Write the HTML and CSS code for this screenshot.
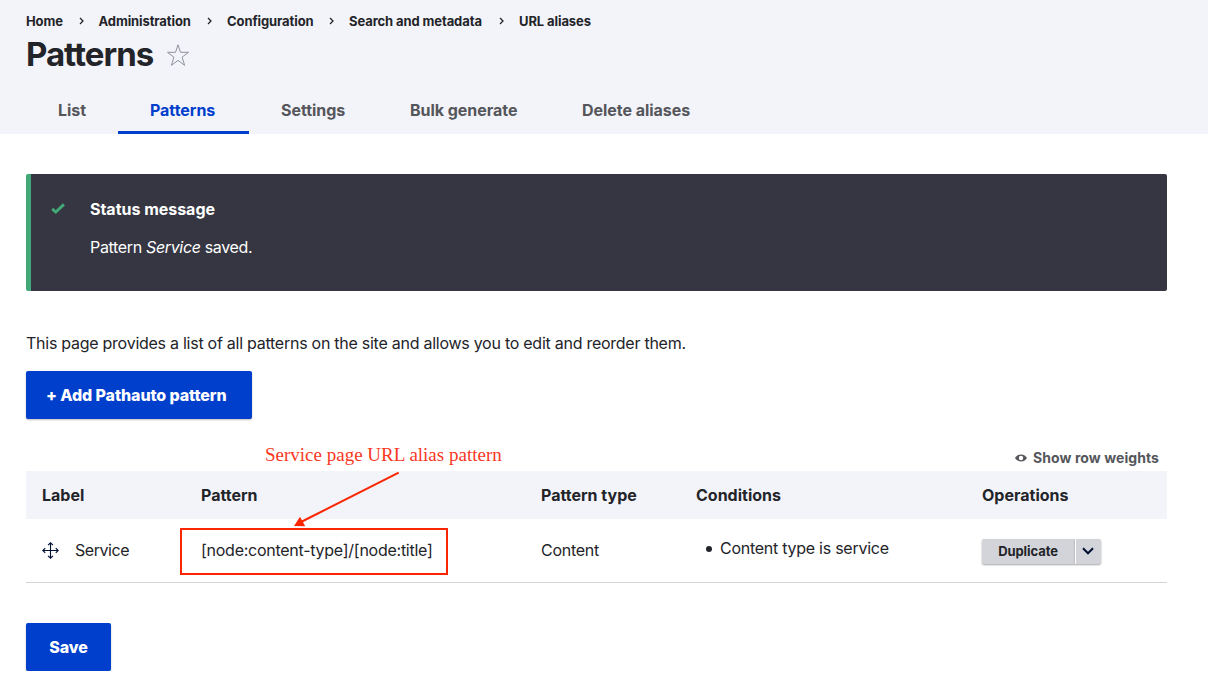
FILE: index.html
```html
<!DOCTYPE html>
<html lang="en">
<head>
<meta charset="utf-8">
<title>Patterns</title>
<link rel="stylesheet" href="styles.css">
</head>
<body>
<header class="page-header">
  <nav class="breadcrumb" aria-label="Breadcrumb">
    <a class="crumb crumb-home">Home</a>
    <svg class="crumb-sep" viewBox="0 0 5 8"><path d="M1 1l3 3-3 3"/></svg>
    <a class="crumb crumb-admin">Administration</a>
    <svg class="crumb-sep" viewBox="0 0 5 8"><path d="M1 1l3 3-3 3"/></svg>
    <a class="crumb crumb-config">Configuration</a>
    <svg class="crumb-sep" viewBox="0 0 5 8"><path d="M1 1l3 3-3 3"/></svg>
    <a class="crumb crumb-search">Search and metadata</a>
    <svg class="crumb-sep" viewBox="0 0 5 8"><path d="M1 1l3 3-3 3"/></svg>
    <a class="crumb">URL aliases</a>
  </nav>
  <div class="title-row">
    <h1 class="title">Patterns</h1>
    <svg class="star" viewBox="0 0 24 24"><path d="M12 1.8L14.5 9.3H22.5L16.1 14.2L18.6 22.3L12 17.4L5.4 22.3L7.9 14.2L1.5 9.3H9.5Z"/></svg>
  </div>
  <nav class="tabs">
    <a class="tab tab-list">List</a>
    <a class="tab tab-patterns is-active">Patterns</a>
    <a class="tab tab-settings">Settings</a>
    <a class="tab tab-bulk">Bulk generate</a>
    <a class="tab tab-delete">Delete aliases</a>
  </nav>
</header>
<main class="content">
  <section class="message">
    <svg class="message-icon" viewBox="0 0 14 11"><path d="M1.2 5.8L4.800 9L12.900 1.400"/></svg>
    <div>
      <h2 class="message-title">Status message</h2>
      <p class="message-text">Pattern <em>Service</em> saved.</p>
    </div>
  </section>
  <p class="intro">This page provides a list of all patterns on the site and allows you to edit and reorder them.</p>
  <button class="button button-add">+ Add Pathauto pattern</button>
  <div class="weights">
    <svg class="eye" viewBox="0 0 12 8"><path fill-rule="evenodd" d="M6 .5C3.200 .5 1 2.200 0 4c1 1.800 3.200 3.500 6 3.500S11 5.800 12 4C11 2.200 8.800 .5 6 .5zM6 1.800a2.200 2.200 0 1 1 0 4.400a2.200 2.200 0 1 1 0-4.400z"/></svg>
    <span>Show row weights</span>
  </div>
  <div class="table">
    <div class="row row-head">
      <div>Label</div><div>Pattern</div><div>Pattern type</div><div>Conditions</div><div>Operations</div>
    </div>
    <div class="row row-body">
      <div class="label-cell">
        <svg class="move" viewBox="0 0 18 18"><path d="M9 1.200V16.800M1.200 9H16.800M6.400 3.400L9 .9L11.600 3.400M6.400 14.600L9 17.100L11.600 14.600M3.400 6.400L.9 9L3.400 11.600M14.600 6.400L17.100 9L14.600 11.600"/></svg>
        <span>Service</span>
      </div>
      <div class="pattern-cell">[node:content-type]/[node:title]</div>
      <div class="type-cell">Content</div>
      <div class="condition"><span class="bullet"></span><span>Content type is service</span></div>
      <div class="dropbutton">
        <button class="duplicate">Duplicate</button>
        <button class="toggle" aria-label="List additional actions"><svg class="chevron" viewBox="0 0 12 8"><path d="M1 1.300l5 5 5-5"/></svg></button>
      </div>
    </div>
    <span class="note">Service page URL alias pattern</span>
    <span class="highlight"></span>
    <svg class="arrow" viewBox="0 0 110 58"><path class="arrow-line" d="M108.700 2.600L12 51.500"/><path class="arrow-head" d="M4 56L10 46.800L15.200 56.200Z"/></svg>
  </div>
  <button class="button button-save">Save</button>
</main>
</body>
</html>
```
FILE: styles.css
```css
* { box-sizing: border-box; }
body {
  margin: 0;
  background: #fff;
  color: #232429;
  font: 16px/24px Inter, "Liberation Sans", sans-serif;
  letter-spacing: -0.26px;
  overflow: hidden;
}
h1, h2, p { margin: 0; }
button { border: 0; font: inherit; letter-spacing: inherit; color: inherit; padding: 0; }
svg { display: block; flex: none; overflow: visible; }

.page-header { height: 134px; background: #f3f4f9; padding: 11px 26px 0; }
.breadcrumb { display: flex; align-items: center; height: 20px; font-size: 13px; line-height: 20px; font-weight: 700; letter-spacing: -0.1px; white-space: nowrap; }
.crumb-home { width: 52.5px; }
.crumb-admin { width: 108.5px; }
.crumb-config { width: 102px; }
.crumb-search { width: 150px; }
.crumb-sep { width: 5px; height: 8px; margin-right: 15px; fill: none; stroke: #232429; stroke-width: 1.3; }
.title-row { display: flex; align-items: center; height: 47px; padding-top: 1px; }
.title { width: 140px; font-size: 33px; line-height: 42px; font-weight: 700; letter-spacing: -1px; margin-top: -2px; }
.star { width: 24px; height: 24px; fill: none; stroke: #8e929c; stroke-width: 1; }
.tabs { display: flex; height: 56px; font-weight: 700; letter-spacing: -0.04px; color: #55565b; white-space: nowrap; }
.tab { padding: 20px 0 0 32px; }
.tab-list { width: 92px; }
.tab-patterns { width: 131px; }
.tab-settings { width: 129px; }
.tab-bulk { width: 172px; }
.is-active { color: #003ecc; border-bottom: 3px solid #003ecc; }

.content { width: 1167px; padding: 40px 0 0 26px; }
.message { display: flex; height: 117px; padding: 23px 0 0 20px; background: #353641; color: #fff; border-left: 5px solid #42a877; border-radius: 2px; }
.message-icon { width: 14px; height: 11px; margin: 6px 25px 0 0; fill: none; stroke: #42a877; stroke-width: 2.900; }
.message-title { font-size: 16px; line-height: 24px; font-weight: 700; letter-spacing: -0.02px; margin-bottom: 14px; }
.message-text { letter-spacing: -0.34px; }
.intro { margin: 40px 0 16px; white-space: nowrap; }
.button { display: block; height: 48px; background: #003ecc; color: #fff; font-weight: 800; letter-spacing: -0.1px; border-radius: 2px; box-shadow: 0 1px 2px rgba(0, 0, 0, 0.25); white-space: nowrap; }
.button-add { width: 226px; padding: 0 0 0 20px; text-align: left; }
.button-save { width: 85px; margin-top: 40px; }
.weights { display: flex; align-items: center; justify-content: flex-end; height: 24px; margin-top: 27px; padding-right: 8px; gap: 6px; color: #55565b; font-size: 14px; font-weight: 700; letter-spacing: 0.08px; }
.eye { width: 12px; height: 8px; fill: #55565b; }

.table { position: relative; margin-top: 1px; }
.row { display: grid; grid-template-columns: 159px 340px 155px 286px 201px; align-items: center; white-space: nowrap; }
.row > div { padding-left: 16px; }
.row-head { height: 48px; background: #f3f4f9; font-weight: 700; letter-spacing: 0; }
.row-body { height: 64px; padding-bottom: 1px; border-bottom: 1px solid #d3d4d9; }
.row .label-cell { display: flex; align-items: center; gap: 16px; }
.label-cell span { letter-spacing: -0.45px; }
.move { width: 17px; height: 17px; fill: none; stroke: #000f33; stroke-width: 1.200; }
.condition { display: flex; align-items: center; gap: 8px; padding-bottom: 4px; }
.row > .condition { padding-left: 26px; }
.bullet { width: 6px; height: 6px; margin-top: 2px; border-radius: 50%; background: #232429; }
.row .dropbutton { display: flex; padding: 2px 0 0 15.5px; font-size: 13px; line-height: 24px; font-weight: 700; letter-spacing: -0.08px; }
.duplicate, .toggle { height: 25px; background: #d3d4d9; box-shadow: 0 1px 2px rgba(0, 0, 0, 0.35); }
.duplicate { width: 93px; border-radius: 2px 0 0 2px; }
.toggle { display: grid; place-items: center; width: 26px; border-left: 1px solid #fff; border-radius: 0 2px 2px 0; }
.chevron { width: 12px; height: 8px; fill: none; stroke: #000f33; stroke-width: 2; }

/* Annotation drawn over the table */
.note { position: absolute; left: 239px; top: -28px; color: #f9381f; font: 19px/24px "Liberation Serif", serif; letter-spacing: 0; white-space: nowrap; }
.highlight { position: absolute; left: 154px; top: 57px; width: 268px; height: 47px; border: 2px solid #fa2600; }
.arrow { position: absolute; left: 264px; top: -1px; width: 110px; height: 58px; }
.arrow-line { fill: none; stroke: #fa2600; stroke-width: 2; }
.arrow-head { fill: #fa2600; }
```
